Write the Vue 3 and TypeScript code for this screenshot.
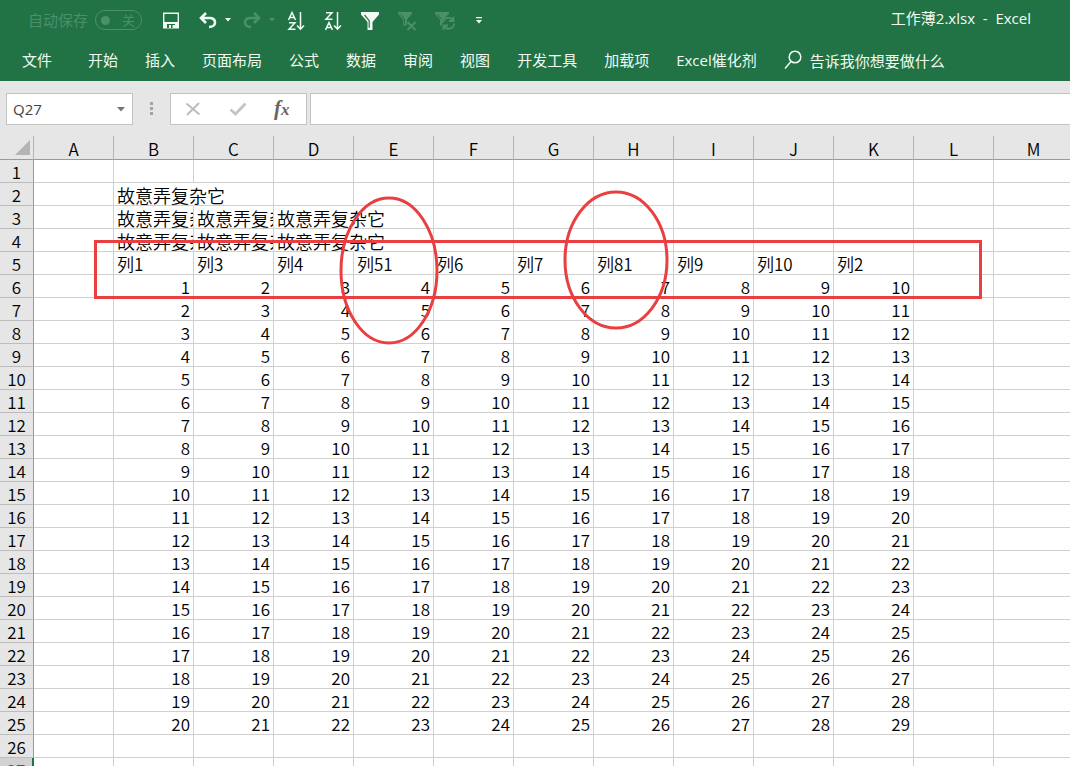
<script setup lang="ts">
import { ref } from 'vue'

interface Cell {
  text: string
  kind: 'empty' | 'label' | 'heading' | 'number'
  fit: 'normal' | 'spill' | 'clip'
}

const columns = 'ABCDEFGHIJKLM'.split('')
const tabs = ['文件', '开始', '插入', '页面布局', '公式', '数据', '审阅', '视图', '开发工具', '加载项', 'Excel催化剂']
const headings = ['列1', '列3', '列4', '列51', '列6', '列7', '列81', '列9', '列10', '列2']
const phrase = '故意弄复杂它'
const activeRow = 27

const autoSave = ref(false)
const cellName = ref('Q27')
const formula = ref('')
const query = ref('')

function cellAt(row: number, col: number): Cell {
  const index = col - 1
  if (row === 2 && col === 1) return { text: phrase, kind: 'label', fit: 'spill' }
  if ((row === 3 || row === 4) && col >= 1 && col <= 3) {
    return { text: phrase, kind: 'label', fit: col === 3 ? 'spill' : 'clip' }
  }
  if (index >= 0 && index < headings.length) {
    if (row === 5) return { text: headings[index], kind: 'heading', fit: 'normal' }
    if (row >= 6 && row <= 25) return { text: String(row - 5 + index), kind: 'number', fit: 'normal' }
  }
  return { text: '', kind: 'empty', fit: 'normal' }
}

const rows = Array.from({ length: activeRow }, (_, i) => ({
  number: i + 1,
  cells: columns.map((_, col) => cellAt(i + 1, col)),
}))
</script>

<template>
  <div class="app">
    <header class="ribbon">
      <div class="titlebar">
        <label class="autosave">
          <span>自动保存</span>
          <input v-model="autoSave" type="checkbox" class="sr" disabled />
          <span class="switch"><i class="knob"></i><span>关</span></span>
        </label>
        <div class="quick">
          <button type="button" aria-label="保存">
            <svg width="18" height="18" viewBox="0 0 18 18">
              <path d="M1.700 2.200h14.600v14.600H1.700z" fill="none" stroke="currentColor" stroke-width="1.400" />
              <path d="M2 11h14v6H2z" fill="currentColor" />
              <path d="M5 13h8v4H5z" fill="#217346" />
              <path d="M7 14h2v3H7zM10.500 14H13v3h-2.500z" fill="currentColor" />
            </svg>
          </button>
          <div class="pair">
            <button type="button" aria-label="撤消">
              <svg width="18" height="18" viewBox="0 0 18 18">
                <path d="M7 2L2 7l5 5M2.500 7H10.500c3.500 0 5.500 1.700 5.500 4.500 0 2.800-2.500 4.500-6 4.500" fill="none" stroke="currentColor" stroke-width="2.600" />
              </svg>
            </button>
            <button type="button" aria-label="撤消列表">
              <svg width="6" height="18" viewBox="0 0 6 18"><path d="M0 7h6L3 10.500z" fill="currentColor" /></svg>
            </button>
          </div>
          <div class="pair dim">
            <button type="button" aria-label="恢复" disabled>
              <svg width="18" height="18" viewBox="0 0 18 18">
                <path d="M11 2l5 5-5 5M15.500 7H7.500C4 7 2 8.700 2 11.500 2 14.300 4.500 16 8 16" fill="none" stroke="currentColor" stroke-width="2.600" />
              </svg>
            </button>
            <button type="button" aria-label="恢复列表" disabled>
              <svg width="6" height="18" viewBox="0 0 6 18"><path d="M0 7h6L3 10.500z" fill="currentColor" /></svg>
            </button>
          </div>
          <button type="button" aria-label="升序">
            <svg width="18" height="20" viewBox="0 0 18 20" fill="none" stroke="currentColor" stroke-width="1.500">
              <path d="M1.500 10L5 2.500 8.500 10M2.500 7.500h5M2 12.700h6L2 19.200h6.500M13.500 2v17M10 15.500l3.500 3.700 3.500-3.700" />
            </svg>
          </button>
          <button type="button" aria-label="降序">
            <svg width="18" height="20" viewBox="0 0 18 20" fill="none" stroke="currentColor" stroke-width="1.500">
              <path d="M2 2.700h6L2 9.200h6.500M1.500 20L5 12.500 8.500 20M2.500 17.500h5M13.500 2v17M10 15.500l3.500 3.700 3.500-3.700" />
            </svg>
          </button>
          <button type="button" aria-label="筛选">
            <svg width="18" height="20" viewBox="0 0 18 20">
              <path d="M0 2h18v2.500L11.500 12v8h-5v-8L0 4.500z" fill="currentColor" />
              <path d="M3.500 5L8.200 10.700v7" fill="none" stroke="#217346" stroke-width="1.200" />
            </svg>
          </button>
          <button type="button" class="dim" aria-label="清除筛选" disabled>
            <svg width="18" height="20" viewBox="0 0 18 20">
              <path d="M0 2h14v1.500L9 9.500v6H5v-6L0 3.500z" fill="currentColor" />
              <path d="M2.800 4.300L6.400 9v5.500" fill="none" stroke="#217346" />
              <path d="M9.500 12l8 8M17.500 12l-8 8" stroke="currentColor" stroke-width="2" />
            </svg>
          </button>
          <button type="button" class="dim" aria-label="重新应用筛选" disabled>
            <svg width="18" height="20" viewBox="0 0 18 20">
              <path d="M0 2h14v1.500L9.500 8 7 11v4.500H5v-6L0 3.500z" fill="currentColor" />
              <path d="M2.800 4.300L6.400 9" fill="none" stroke="#217346" />
              <path d="M8 13C8.500 7 15 6 18 10.500M18.500 6.500V11H14M19 13.500c-.5 6-7 7-10 2.500M8.500 20v-4.500H13" fill="none" stroke="currentColor" stroke-width="1.800" />
            </svg>
          </button>
          <button type="button" class="more" aria-label="自定义快速访问工具栏">
            <svg width="6" height="18" viewBox="0 0 6 18"><path d="M0 6h6v1.300H0zM0 9h6L3 12.500z" fill="currentColor" /></svg>
          </button>
        </div>
        <span class="doc">工作薄2.xlsx&nbsp; -&nbsp; Excel</span>
      </div>
      <nav class="tabs">
        <button v-for="tab in tabs" :key="tab" type="button" class="tab">{{ tab }}</button>
        <label class="tell">
          <svg width="18" height="20" viewBox="0 0 18 20" fill="none" stroke="currentColor" stroke-width="1.500">
            <circle cx="11" cy="7" r="5.800" />
            <path d="M7 11.500L1 18.500" />
          </svg>
          <input v-model="query" type="text" placeholder="告诉我你想要做什么" aria-label="告诉我你想要做什么" />
        </label>
      </nav>
    </header>

    <section class="formula-bar">
      <div class="box name-box">
        <input v-model="cellName" type="text" aria-label="名称框" />
        <button type="button" aria-label="名称列表">
          <svg width="8" height="5" viewBox="0 0 8 5"><path d="M0 0h8L4 4.500z" fill="#777" /></svg>
        </button>
      </div>
      <svg class="grip" width="4" height="14" viewBox="0 0 4 14" fill="#a3a3a3">
        <path d="M0 0h3v3H0zM0 5h3v3H0zM0 10h3v3H0z" />
      </svg>
      <div class="box actions">
        <button type="button" aria-label="取消">
          <svg width="18" height="18" viewBox="0 0 18 18"><path d="M2.500 3.500l13 11M15 3L3 15" stroke="#bdbdbd" stroke-width="2" /></svg>
        </button>
        <button type="button" aria-label="输入">
          <svg width="18" height="18" viewBox="0 0 18 18"><path d="M1.500 9.500l5 4.500L16.500 3.500" fill="none" stroke="#c4c4c4" stroke-width="2.800" /></svg>
        </button>
        <button type="button" class="fx" aria-label="插入函数"><i>f</i><i class="sub">x</i></button>
      </div>
      <input v-model="formula" class="box formula" type="text" aria-label="编辑栏" />
    </section>

    <main class="sheet">
      <table>
        <colgroup>
          <col class="row-col" />
          <col v-for="c in columns" :key="c" :class="{ 'data-col': c !== 'M' }" />
        </colgroup>
        <thead>
          <tr>
            <th class="corner" aria-label="全选">
              <svg width="15" height="15" viewBox="0 0 15 15"><path d="M15 0v15H0z" fill="#b4b4b4" /></svg>
            </th>
            <th v-for="c in columns" :key="c" scope="col" class="col-head">{{ c }}</th>
          </tr>
        </thead>
        <tbody>
          <tr v-for="row in rows" :key="row.number">
            <th scope="row" class="row-head" :class="{ active: row.number === activeRow }">{{ row.number }}</th>
            <td v-for="(cell, i) in row.cells" :key="i" :class="[cell.kind, cell.fit]">{{ cell.text }}</td>
          </tr>
        </tbody>
      </table>
      <svg class="marks" width="1000" height="220" viewBox="0 0 1000 220" fill="none" stroke="#e93f41" stroke-width="3" aria-hidden="true">
        <rect x="95.500" y="105.500" width="885" height="56" />
        <ellipse cx="389" cy="134.500" rx="48" ry="72.500" />
        <ellipse cx="616" cy="124" rx="51" ry="68" />
      </svg>
    </main>
  </div>
</template>

<style>
body {
  background: #e6e6e6;
}
</style>

<style scoped>
.app {
  display: flex;
  flex-direction: column;
  height: 100vh;
  overflow: hidden;
  background: #e6e6e6;
  font-family: "Open Sans", "Noto Sans CJK SC", sans-serif;
  font-size: 15px;
}

button,
input {
  margin: 0;
  padding: 0;
  border: 0;
  background: none;
  color: inherit;
  font: inherit;
  outline: none;
}

svg {
  display: block;
  overflow: visible;
}

.ribbon {
  flex: none;
  background: #217346;
  color: #f1fbf4;
}

.titlebar {
  display: flex;
  align-items: center;
  height: 40px;
  padding: 0 39px 0 28px;
}

.autosave {
  display: flex;
  align-items: center;
  gap: 7px;
  color: #4b9069;
}

.autosave > span:first-child {
  padding-bottom: 2px;
}

.sr {
  position: absolute;
  opacity: 0;
}

.switch {
  display: flex;
  align-items: center;
  justify-content: space-between;
  box-sizing: border-box;
  width: 47px;
  height: 20px;
  padding: 0 6px 0 5px;
  border: 1px solid #4b9069;
  border-radius: 10px;
  font-size: 13px;
  line-height: 16px;
}

.knob {
  width: 9px;
  height: 9px;
  border-radius: 50%;
  background: #4b9069;
}

.quick {
  display: flex;
  align-items: center;
  gap: 19px;
  margin-left: 20px;
}

.pair {
  display: flex;
  gap: 8px;
  margin-right: -7px;
}

.dim {
  color: #4b9069;
}

.more {
  margin-left: 4px;
}

.doc {
  margin-left: auto;
  line-height: 20px;
  padding-bottom: 4px;
  white-space: nowrap;
}

.tabs {
  display: flex;
  align-items: center;
  gap: 27px;
  height: 39px;
  padding: 0 0 2px 22px;
}

.tab {
  line-height: 20px;
  white-space: nowrap;
}

.tab:first-child {
  margin-right: 9px;
}

.tell {
  display: flex;
  align-items: center;
  gap: 8px;
}

.tell input {
  width: 150px;
  padding-top: 2px;
  line-height: 20px;
}

.tell input::placeholder {
  color: #f1fbf4;
  opacity: 1;
}

.formula-bar {
  display: flex;
  flex: none;
  align-items: center;
  padding: 12px 0 11px 6px;
}

.box {
  box-sizing: border-box;
  height: 32px;
  border: 1px solid #c3c3c3;
  background: #fff;
}

.name-box {
  display: flex;
  align-items: center;
  width: 127px;
  padding: 0 7px 0 6px;
  color: #444;
}

.name-box input {
  flex: 1;
  min-width: 0;
}

.grip {
  margin: 0 16px 0 17px;
}

.actions {
  display: flex;
  align-items: center;
  gap: 27px;
  width: 137px;
  padding: 0 13px;
}

.fx {
  display: flex;
  align-items: baseline;
  color: #666;
  font: bold 21px/24px "Liberation Serif", serif;
}

.sub {
  font-size: 17px;
}

.formula {
  flex: 1;
  min-width: 0;
  margin-left: 3px;
  padding: 0 6px;
  border-right: 0;
}

.sheet {
  position: relative;
  flex: 1;
  min-height: 0;
  overflow: hidden;
}

table {
  width: 100%;
  min-width: 1074px;
  table-layout: fixed;
  border-collapse: separate;
  border-spacing: 0;
  background: #fff;
  color: #000;
  font-family: "Noto Sans CJK SC", sans-serif;
  font-size: 17px;
  font-weight: 350;
  line-height: 20px;
}

.row-col {
  width: 34px;
}

.data-col {
  width: 80px;
}

th,
td {
  box-sizing: border-box;
  height: 23px;
  padding: 2px 0 0;
  border-right: 1px solid #d0d0d0;
  border-bottom: 1px solid #d0d0d0;
  font-weight: 350;
  white-space: nowrap;
}

thead th {
  height: 24px;
  border-right: 1px solid #b5b5b5;
  border-bottom: 1px solid #999;
  background: #e6e6e6;
}

.corner svg {
  margin: 2px 3px 4px auto;
}

.row-head {
  border-right-color: #9a9a9a;
  border-bottom-color: #bcbcbc;
  background: #e6e6e6;
}

.row-head.active {
  border-right: 2px solid #217346;
  background: #d2d2d2;
  color: #217346;
}

.label {
  padding-left: 3px;
  font-size: 18px;
}

.heading {
  padding-left: 3px;
}

.number {
  padding-right: 3px;
  text-align: right;
}

.spill {
  border-right-color: transparent;
}

.clip {
  overflow: hidden;
}

.marks {
  position: absolute;
  top: 0;
  left: 0;
}
</style>
